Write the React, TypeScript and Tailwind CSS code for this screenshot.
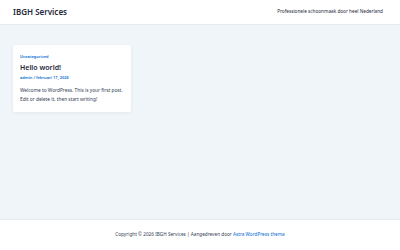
export default function App() {
  return (
    <div className="flex h-[250px] w-[400px] flex-col bg-[#f0f5fa] font-['Noto_Sans',sans-serif] text-[#3a3a3a]">
      {/* header */}
      <header className="flex h-[25px] items-center justify-between border-b border-[#e6ebf0] bg-white px-[13px]">
        <div className="text-[8px] font-semibold text-[#1e293b]">IBGH Services</div>
        <div className="pr-[4px] text-[4.7px] text-[#1e293b]">Professionele schoonmaak door heel Nederland</div>
      </header>

      {/* main */}
      <main className="flex-1 px-[13px] pt-[20px]">
        <article className="w-[118px] rounded-[2px] bg-white px-[7px] pb-[9px] pt-[9px] shadow-[0_1px_4px_rgba(0,0,0,0.06)]">
          <div className="text-[4px] font-semibold leading-[6px] text-[#046bd2]">Uncategorized</div>
          <h2 className="mt-[3px] text-[7px] font-semibold leading-[10px] text-[#1e293b]">Hello world!</h2>
          <div className="mt-[2px] text-[4px] font-semibold leading-[6px] text-[#046bd2]">admin / februari 17, 2026</div>
          <p className="mt-[5px] text-[4.8px] leading-[8.5px] text-[#334155]">
            Welcome to WordPress. This is your first post. Edit or delete it, then start writing!
          </p>
        </article>
      </main>

      {/* footer */}
      <footer className="flex h-[31px] items-center justify-center border-t border-[#e6ebf0] bg-white text-[4.7px] text-[#334155]">
        <span>
          Copyright © 2026 IBGH Services | Aangedreven door{' '}
          <span className="text-[#046bd2]">Astra WordPress thema</span>
        </span>
      </footer>
    </div>
  )
}
